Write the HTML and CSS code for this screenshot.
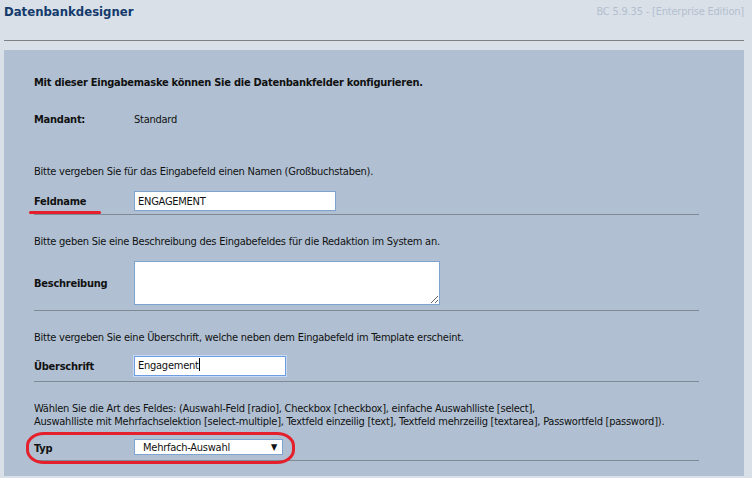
FILE: index.html
```html
<!DOCTYPE html>
<html>
    <head>
        <meta charset="utf-8">
        <title>Datenbankdesigner</title>
        <link rel="stylesheet" href="styles.css">
    </head>
    <body>
        <div class="head">
            <h1>Datenbankdesigner</h1>
            <span class="version">BC 5.9.35 - [Enterprise Edition]</span>
        </div>
        <div class="panel">
            <div class="form">
                <p class="intro">Mit dieser Eingabemaske können Sie die Datenbankfelder konfigurieren.</p>
                <div class="row mandant">
                    <span class="label">Mandant:</span>
                    <span>Standard</span>
                </div>

                <div class="section first">
                    <p class="hint">Bitte vergeben Sie für das Eingabefeld einen Namen (Großbuchstaben).</p>
                    <div class="row">
                        <span class="label marked">Feldname</span>
                        <input class="field name" type="text" value="ENGAGEMENT">
                    </div>
                </div>

                <div class="section">
                    <p class="hint">Bitte geben Sie eine Beschreibung des Eingabefeldes für die Redaktion im System an.</p>
                    <div class="row">
                        <span class="label">Beschreibung</span>
                        <textarea class="field desc"></textarea>
                    </div>
                </div>

                <div class="section">
                    <p class="hint short">Bitte vergeben Sie eine Überschrift, welche neben dem Eingabefeld im Template erscheint.</p>
                    <div class="row">
                        <span class="label">Überschrift</span>
                        <div class="field title focus">Engagement<span class="caret"></span></div>
                    </div>
                </div>

                <div class="section">
                    <p class="hint">Wählen Sie die Art des Feldes: (Auswahl-Feld [radio], Checkbox [checkbox], einfache Auswahlliste [select],<br>Auswahlliste mit Mehrfachselektion [select-multiple], Textfeld einzeilig [text], Textfeld mehrzeilig [textarea], Passwortfeld [password]).</p>
                    <div class="row circled">
                        <span class="label">Typ</span>
                        <div class="field select">
                            <span>Mehrfach-Auswahl</span>
                            <span class="arrow">&#9660;</span>
                        </div>
                    </div>
                </div>
            </div>
        </div>
    </body>
</html>
```

FILE: styles.css
```css
html, body {
    margin: 0;
    padding: 0;
}

body {
    font-size: 11px;
    font-family: "DejaVu Sans Condensed", "Liberation Sans", sans-serif;
    letter-spacing: -0.25px;
    background-color: #d9e0e8;
    color: #111;
    height: 478px;
    overflow: hidden;
}

div.head {
    display: flex;
    justify-content: space-between;
    align-items: flex-start;
    margin: 0 8px 0 4px;
    height: 40px;
    border-bottom: solid 1px #7f8184;
}

div.head h1 {
    margin: 4px 0 0 0;
    font-size: 13px;
    font-weight: bold;
    letter-spacing: 0;
    color: #133a6b;
}

span.version {
    margin-top: 5px;
    color: #b3bfcf;
    font-size: 11px;
    letter-spacing: -0.2px;
}

div.panel {
    margin: 9px 8px 0 4px;
    background-color: #b0c0d2;
    padding: 26px 0 15px 30px;
}

div.form {
    width: 665px;
}

p {
    margin: 0;
    line-height: 13px;
}

p.intro {
    font-weight: bold;
}

div.row {
    display: flex;
    align-items: center;
    position: relative;
}

div.row.mandant {
    margin-top: 24px;
    line-height: 13px;
}

span.label {
    width: 100px;
    flex: none;
    font-weight: bold;
}

div.section {
    padding: 20px 0 5px 0;
    border-bottom: solid 1px #808a94;
}

div.section.first {
    padding-top: 39px;
    padding-bottom: 3px;
}

p.hint {
    margin-bottom: 13px;
}

p.hint.short {
    margin-bottom: 12px;
}

.field {
    box-sizing: border-box;
    border: solid 1px #7fa3cf;
    background-color: white;
    font-family: inherit;
    font-size: 11px;
    letter-spacing: inherit;
    color: #111;
    margin: 0;
    padding: 0 3px;
    outline: none;
}

input.name {
    width: 202px;
    height: 20px;
}

textarea.desc {
    width: 306px;
    height: 44px;
    resize: both;
}

div.title {
    width: 152px;
    height: 20px;
    line-height: 18px;
    border-color: #6d9de0;
    box-shadow: 0 0 0 1px #c7dcf4;
}

span.caret {
    display: inline-block;
    width: 1px;
    height: 13px;
    background-color: black;
    vertical-align: -2px;
}

div.select {
    display: flex;
    justify-content: space-between;
    align-items: center;
    width: 149px;
    height: 16px;
    margin-top: -2px;
    padding: 0 5px 0 8px;
}

span.arrow {
    font-size: 9px;
}

span.marked::after {
    content: "";
    position: absolute;
    left: -5px;
    top: 20px;
    width: 72px;
    height: 3px;
    border-radius: 2px;
    background-color: #e3202b;
}

div.circled::before {
    content: "";
    position: absolute;
    left: -8px;
    top: -9px;
    width: 263px;
    height: 26px;
    border: solid 3px #e3202b;
    border-radius: 18px / 14px;
}
```
